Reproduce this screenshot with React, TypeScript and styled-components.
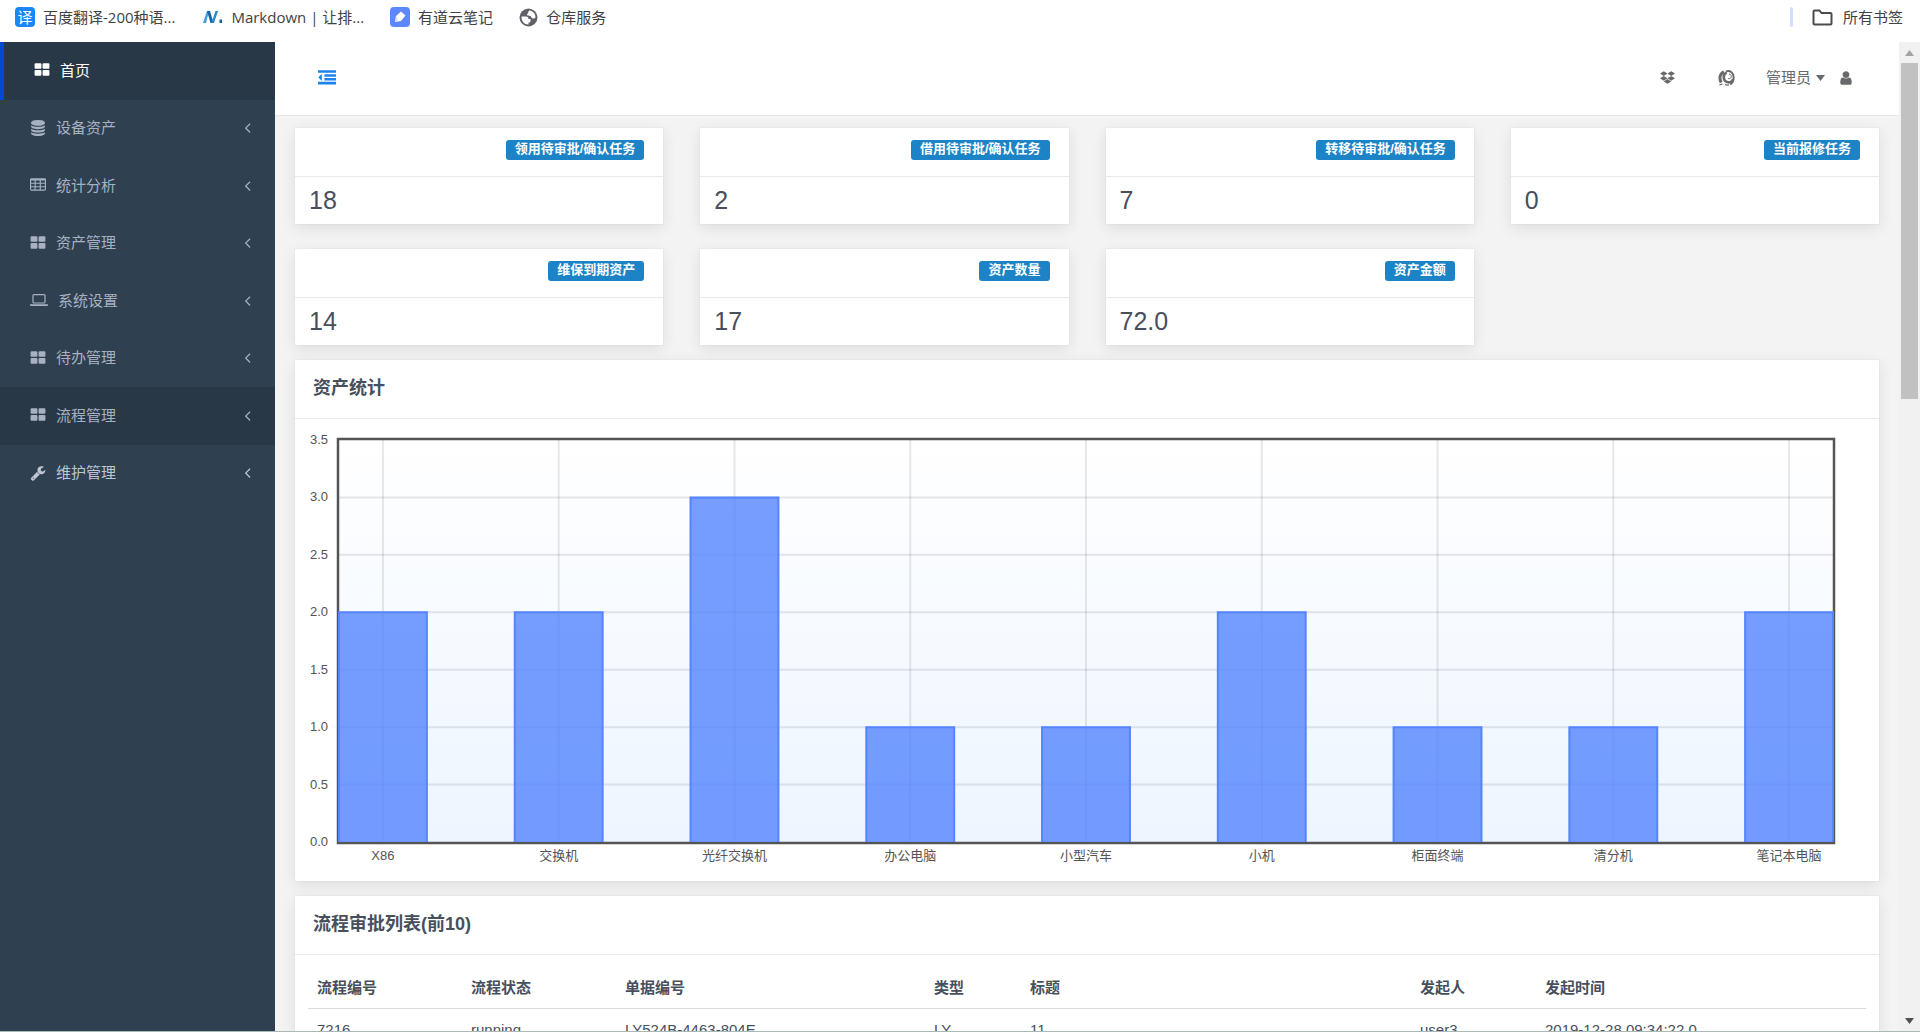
import React, { useLayoutEffect, useRef, useState } from "react";
import styled, { createGlobalStyle, css } from "styled-components";
import { FaDropbox } from "react-icons/fa";

const sans = `"Liberation Sans", "Noto Sans CJK SC", sans-serif`;

const GlobalStyle = createGlobalStyle`
  *, *::before, *::after { box-sizing: border-box; }
  body { margin: 0; overflow: hidden; background: #fff; font: 15px/21px ${sans}; color: #484f5c; }
  a { color: inherit; text-decoration: none; }
  button { border: 0; padding: 0; background: none; font: inherit; color: inherit; cursor: pointer; }
  ul { margin: 0; padding: 0; list-style: none; }
`;

const Page = styled.div`
  display: flex;
  flex-direction: column;
  height: 100vh;
  border-bottom: 1px solid #a9bab6;
`;

/* bookmarks bar */
const Bookmarks = styled.nav`
  display: flex;
  align-items: center;
  flex: none;
  height: 42px;
  padding: 0 17px 8px 15px;
  color: #3f4144;
  font-family: "Open Sans", "Noto Sans CJK SC", sans-serif;
`;
const Bookmark = styled.a`
  display: flex;
  align-items: center;
  gap: 8px;
  margin-right: 26px;
  white-space: nowrap;
  svg { flex: none; }
`;
const AllBookmarks = styled.button`
  display: flex;
  align-items: center;
  gap: 10px;
  margin-left: auto;
  padding-left: 19px;
  &::before { content: ""; width: 3px; height: 20px; margin-right: 9px; border-radius: 2px; background: #cfe0fc; }
`;
const SiteBadge = styled.span`
  display: grid;
  place-items: center;
  width: 20px;
  height: 20px;
  border-radius: 4px;
  background: #1a86fa;
  color: #fff;
  font-size: 15px;
  line-height: 20px;
`;

const Body = styled.div`
  display: flex;
  flex: 1;
  min-height: 0;
`;

/* sidebar */
const Sidebar = styled.aside`
  flex: none;
  width: 275px;
  background: #2f4050;
`;
const NavList = styled.ul`
  display: grid;
  grid-auto-rows: 1fr;
  height: 460px;
`;
const NavItem = styled.li<{ $tone?: "active" | "dark" | "light" }>`
  display: flex;
  color: ${(p) => (p.$tone === "active" ? "#fff" : p.$tone === "light" ? "#bfc7d4" : "#a7b1c2")};
  ${(p) => (p.$tone === "active" || p.$tone === "dark") && css`background: #293846;`}
  ${(p) => p.$tone === "active" && css`border-left: 4px solid #0549d2;`}
`;
const NavLink = styled.a`
  display: flex;
  align-items: center;
  flex: 1;
  gap: 10px;
  padding: 0 19px 1px 30px;
  svg:last-child:not(:first-child) { margin-left: auto; }
`;

/* main column */
const Main = styled.main`
  flex: 1;
  min-width: 0;
  overflow: hidden;
  background: #f3f3f3;
`;
const TopBar = styled.header`
  display: flex;
  align-items: center;
  height: 74px;
  padding: 0 45px 2px 43px;
  border-bottom: 1px solid #e7e7e7;
  background: #fff;
  color: #676a6c;
`;
const ToggleButton = styled.button`
  display: flex;
  color: #1d84ee;
`;
const Tools = styled.div`
  display: flex;
  align-items: center;
  margin-left: auto;
`;
const ToolButton = styled.button`
  display: flex;
  margin-right: 43px;
`;
const UserButton = styled.button`
  display: flex;
  align-items: center;
  gap: 5px;
  margin-left: -12px;
  svg:last-child { margin-left: 8px; }
`;
const Content = styled.div`
  display: flex;
  flex-direction: column;
  gap: 15px;
  padding: 12px 20px;
`;
const cardShadow = css`
  background: #fff;
  box-shadow: 0 0 0 1px rgba(0, 0, 0, 0.02), 0 4px 14px rgba(0, 0, 0, 0.09);
`;
const StatGrid = styled.section`
  display: grid;
  grid-template-columns: repeat(4, 1fr);
  gap: 25px 37px;
`;
const StatCard = styled.article`
  ${cardShadow}
`;
const StatHead = styled.div`
  display: flex;
  justify-content: flex-end;
  height: 49px;
  padding: 12px 19px;
  border-bottom: 1px solid #e7e9ec;
`;
const Badge = styled.span`
  height: 20px;
  padding: 0 9px;
  border-radius: 3px;
  background: #1c84c6;
  color: #fff;
  font-size: 13px;
  font-weight: 700;
  line-height: 18px;
`;
const StatValue = styled.div`
  padding: 9px 14px 10px;
  font-size: 25px;
  line-height: 28px;
`;
const Panel = styled.section`
  ${cardShadow}
`;
const PanelTitle = styled.h2`
  margin: 0;
  padding: 18px 18px 20px;
  border-bottom: 1px solid #e7e9ec;
  font-size: 18px;
  font-weight: 700;
  line-height: 20px;
`;
const PanelBody = styled.div`
  padding: 13px;
`;
const ChartBox = styled.div`
  height: 436px;
  svg { display: block; overflow: visible; }
  text { font-size: 13px; fill: #545454; }
`;

/* table */
const Table = styled.table`
  width: 100%;
  table-layout: fixed;
  border-collapse: collapse;
  text-align: left;
`;
const Th = styled.th`
  padding: 9px 9px 10px;
  border-bottom: 1px solid #d9dbdd;
  line-height: 21px;
`;
const Td = styled.td`
  padding: 10px 9px;
  line-height: 21px;
`;

/* scrollbar */
const ScrollTrack = styled.div`
  display: flex;
  flex-direction: column;
  align-items: center;
  flex: none;
  width: 21px;
  background: #f1f1f1;
`;
const ScrollArrow = styled.span<{ $down?: boolean }>`
  display: grid;
  place-items: center;
  height: 21px;
  ${(p) => p.$down && css`margin-top: auto;`}
`;
const ScrollThumb = styled.span`
  width: 17px;
  height: 34%;
  background: #c1c1c1;
`;

/* icons on a 1792-unit grid */
const ICONS = {
  thLarge: "M832 1024v384q0 52-38 90t-90 38h-512q-52 0-90-38t-38-90v-384q0-52 38-90t90-38h512q52 0 90 38t38 90zm0-768v384q0 52-38 90t-90 38h-512q-52 0-90-38t-38-90v-384q0-52 38-90t90-38h512q52 0 90 38t38 90zm896 768v384q0 52-38 90t-90 38h-512q-52 0-90-38t-38-90v-384q0-52 38-90t90-38h512q52 0 90 38t38 90zm0-768v384q0 52-38 90t-90 38h-512q-52 0-90-38t-38-90v-384q0-52 38-90t90-38h512q52 0 90 38t38 90z",
  database: "M896 768q237 0 443-43t325-127v170q0 69-103 128t-280 93.500-385 34.500-385-34.500-280-93.500-103-128v-170q119 84 325 127t443 43zm0 768q237 0 443-43t325-127v170q0 69-103 128t-280 93.500-385 34.500-385-34.500-280-93.500-103-128v-170q119 84 325 127t443 43zm0-384q237 0 443-43t325-127v170q0 69-103 128t-280 93.500-385 34.500-385-34.500-280-93.500-103-128v-170q119 84 325 127t443 43zm0-1152q208 0 385 34.500t280 93.500 103 128v128q0 69-103 128t-280 93.500-385 34.500-385-34.500-280-93.500-103-128v-128q0-69 103-128t280-93.500 385-34.500z",
  wrench: "M448 1472q0-26-19-45t-45-19-45 19-19 45 19 45 45 19 45-19 19-45zm644-420l-682 682q-37 37-90 37-52 0-91-37l-106-108q-38-36-38-90 0-53 38-91l681-681q39 98 114.500 173.500t173.500 114.500zm634-435q0 39-23 106-47 134-164.500 217.500t-258.500 83.500q-185 0-316.500-131.500t-131.500-316.500 131.500-316.500 316.500-131.500q58 0 121.500 16.500t107.500 46.500q16 11 16 28t-16 28l-293 169v224l193 107q5-3 79-48.500t135.500-81 70.500-35.500q15 0 23.500 10t8.500 25z",
  outdent: "M384 544v576q0 13-9.500 22.500t-22.500 9.500q-14 0-23-9l-288-288q-9-9-9-23t9-23l288-288q9-9 23-9 13 0 22.500 9.500t9.500 22.500zM0 1280h1792v256h-1792zM640 896h1152v256h-1152zM640 512h1152v256h-1152zM0 128h1792v256h-1792z",
  angleLeft: "M1203 544q0 13-10 23l-393 393 393 393q10 10 10 23t-10 23l-50 50q-10 10-23 10t-23-10l-466-466q-10-10-10-23t10-23l466-466q10-10 23-10t23 10l50 50q10 10 10 23z",
  user: "M1536 1399q0 109-62.500 187t-150.500 78h-854q-88 0-150.500-78t-62.500-187q0-85 8.500-160.500t31.500-152 58.500-131 94-89 134.500-34.500q131 128 313 128t313-128q76 0 134.500 34.500t94 89 58.500 131 31.500 152 8.500 160.500zm-256-887q0 159-112.500 271.500t-271.500 112.500-271.500-112.500-112.500-271.500 112.500-271.500 271.500-112.500 271.500 112.500 112.500 271.500z",
  table: "M160 128h1472q160 0 160 160v1088q0 160-160 160h-1472q-160 0-160-160v-1088q0-160 160-160zM128 384v256h384v-256zM640 384v256h448v-256zM1216 384v256h448v-256zM128 768v256h384v-256zM640 768v256h448v-256zM1216 768v256h448v-256zM128 1152v256h384v-256zM640 1152v256h448v-256zM1216 1152v256h448v-256z",
  laptop: "M416 1280q-66 0-113-47t-47-113v-704q0-66 47-113t113-47h1088q66 0 113 47t47 113v704q0 66-47 113t-113 47h-1088zm-32-864v704q0 13 9.500 22.500t22.500 9.500h1088q13 0 22.500-9.500t9.500-22.500v-704q0-13-9.500-22.500t-22.500-9.500h-1088q-13 0-22.500 9.500t-9.500 22.500zm1376 928h160v96q0 40-47 68t-113 28h-1600q-66 0-113-28t-47-68v-96h1760z",
};
type IconName = keyof typeof ICONS;

function Icon({ name, size = 16, box = "0 0 1792 1792" }: { name: IconName; size?: number; box?: string }) {
  return (
    <svg width={size} height={size} viewBox={box} fill="currentColor" fillRule="evenodd" aria-hidden="true">
      <path d={ICONS[name]} />
    </svg>
  );
}

const SwirlIcon = () => (
  <svg width="17" height="16" viewBox="0 0 17 16" fill="none" stroke="currentColor" aria-hidden="true">
    <path d="M6 2C2 3.500 .8 8 3.200 12.500" strokeWidth="3" />
    <path d="M8.500 2.500C4.500 5 5 10.500 9 12c3 1 5.500-.5 6-3" strokeWidth="2.600" />
    <path d="M8 1.500C12 0 16 3 15.600 8c-.1 3-1.500 5.500-3.300 6.500" strokeWidth="2" />
    <path d="M11 4c2 .3 2.800 1.800 2 3.500-.6 1.200-2 1.500-3 .8" strokeWidth="1" />
    <path d="M1.500 14.800l3-.8M7 14.500c1.200.6 2.600.7 4 .3" strokeWidth="1.200" />
  </svg>
);
const NIcon = () => (
  <svg width="22" height="16" viewBox="-2 0 22 16" aria-hidden="true">
    <path d="M0 14L4 2h2L3 14z" fill="#3ba0dc" />
    <path d="M4 2h3l3.500 12h-3z" fill="#17659f" />
    <path d="M8.500 14L12.500 2h2.500l-4 12z" fill="#2787c8" />
    <path d="M16.500 10.500h2.500v3.500h-2.500z" fill="#17659f" />
  </svg>
);
const NoteIcon = () => (
  <svg width="20" height="20" viewBox="0 0 20 20" aria-hidden="true">
    <rect width="20" height="20" rx="4" fill="#5b87ff" />
    <path d="M5 15l1-6 5-4.500 4.500 4L11 14z" fill="#fff" />
    <path d="M5 15l1-6 2 4z" fill="#cfdcff" />
  </svg>
);
const GlobeIcon = () => (
  <svg width="19" height="19" viewBox="0 0 19 19" aria-hidden="true">
    <circle cx="9.500" cy="9.500" r="9" fill="#5f6368" />
    <path d="M2.500 8.500h4.700c1.400 0 2.300 1 2.300 2.500h2v2c0 1.200-.8 1.600-2 1.600v1.900C5 16.500 2.400 13 2.500 8.500z" fill="#fff" />
    <path d="M10.500 2.500c3.500.4 6 3.200 6 7-.8 1.100-2.600 1.200-3.700.4-.8-.6-.6-1.400-1.600-1.800-1.300-.4-2.900-.1-3.100-1.300-.2-1.100 1.200-1.300 1.200-2.300 0-.8.300-1.600 1.200-2z" fill="#fff" />
  </svg>
);
const FolderIcon = () => (
  <svg width="21" height="17" viewBox="0 0 21 17" fill="none" stroke="#4a4c50" strokeWidth="2" aria-hidden="true">
    <path d="M2.500 1.500h5l2 2.500h9q1 0 1 1v9.500q0 1-1 1h-16q-1 0-1-1v-12q0-1 1-1z" />
  </svg>
);
const Triangle = ({ down, color }: { down?: boolean; color: string }) => (
  <svg width="9" height="6" viewBox="0 0 9 6" aria-hidden="true">
    <path d={down ? "M0 0h9L4.500 6z" : "M0 6h9L4.500 0z"} fill={color} />
  </svg>
);

const NAV: { label: string; icon: IconName; size?: number; box?: string; tone?: "active" | "dark" | "light" }[] = [
  { label: "首页", icon: "thLarge", tone: "active" },
  { label: "设备资产", icon: "database" },
  { label: "统计分析", icon: "table" },
  { label: "资产管理", icon: "thLarge" },
  { label: "系统设置", icon: "laptop", size: 18, box: "0 0 1920 1792" },
  { label: "待办管理", icon: "thLarge" },
  { label: "流程管理", icon: "thLarge", tone: "dark" },
  { label: "维护管理", icon: "wrench", tone: "light" },
];

const STATS = [
  ["领用待审批/确认任务", "18"],
  ["借用待审批/确认任务", "2"],
  ["转移待审批/确认任务", "7"],
  ["当前报修任务", "0"],
  ["维保到期资产", "14"],
  ["资产数量", "17"],
  ["资产金额", "72.0"],
];

const BARS: [string, number][] = [
  ["X86", 2],
  ["交换机", 2],
  ["光纤交换机", 3],
  ["办公电脑", 1],
  ["小型汽车", 1],
  ["小机", 2],
  ["柜面终端", 1],
  ["清分机", 1],
  ["笔记本电脑", 2],
];

const COLUMNS: [string, number | undefined][] = [
  ["流程编号", 154],
  ["流程状态", 154],
  ["单据编号", 309],
  ["类型", 96],
  ["标题", 390],
  ["发起人", 125],
  ["发起时间", undefined],
];
const ROW = ["7216", "running", "LY524B-4463-804E", "LY", "11", "user3", "2019-12-28 09:34:22.0"];

function BarChart() {
  const box = useRef<HTMLDivElement>(null);
  const [width, setWidth] = useState(1556);
  useLayoutEffect(() => {
    const el = box.current!;
    const measure = () => setWidth(el.clientWidth);
    measure();
    const observer = new ResizeObserver(measure);
    observer.observe(el);
    return () => observer.disconnect();
  }, []);

  const left = 31;
  const top = 8;
  const plotW = width - left - 33;
  const plotH = 402;
  const unitX = plotW / 8.5;
  const unitY = plotH / 3.5;
  const ticks = [0, 0.5, 1, 1.5, 2, 2.5, 3, 3.5];

  return (
    <ChartBox ref={box}>
      <svg width={width} height={436} role="img" aria-label="资产统计">
        <defs>
          <linearGradient id="plot" x1="0" y1="0" x2="0" y2="1">
            <stop offset="0" stopColor="#fff" />
            <stop offset="1" stopColor="#edf5ff" />
          </linearGradient>
        </defs>
        <rect x={left} y={top} width={plotW} height={plotH} fill="url(#plot)" />
        <g stroke="#545454" strokeOpacity="0.14" strokeWidth="2">
          {ticks.slice(1, -1).map((t) => (
            <line key={t} x1={left} x2={left + plotW} y1={top + plotH - t * unitY} y2={top + plotH - t * unitY} />
          ))}
          {BARS.map(([name], i) => (
            <line key={name} x1={left + (i + 0.25) * unitX} x2={left + (i + 0.25) * unitX} y1={top} y2={top + plotH} />
          ))}
        </g>
        <rect x={left - 1} y={top - 1} width={plotW + 2} height={plotH + 2} fill="none" stroke="#545454" strokeWidth="2.500" />
        {BARS.map(([name, value], i) => {
          const x = left + i * unitX;
          const y = top + plotH - value * unitY;
          const w = unitX / 2;
          return (
            <g key={name}>
              <rect x={x} y={y} width={w} height={value * unitY} fill="#5484ff" fillOpacity="0.8" />
              <path d={`M${x} ${top + plotH}V${y}H${x + w}V${top + plotH}`} fill="none" stroke="#5484ff" strokeWidth="2" />
              <text x={x + w / 2} y={428} textAnchor="middle">{name}</text>
            </g>
          );
        })}
        {ticks.map((t) => (
          <text key={t} x={20} y={top + 4 + plotH - t * unitY} textAnchor="end">{t.toFixed(1)}</text>
        ))}
      </svg>
    </ChartBox>
  );
}

export default function App() {
  return (
    <Page>
      <GlobalStyle />
      <Bookmarks>
        <Bookmark href="#"><SiteBadge>译</SiteBadge>百度翻译-200种语...</Bookmark>
        <Bookmark href="#"><NIcon />Markdown | 让排...</Bookmark>
        <Bookmark href="#"><NoteIcon />有道云笔记</Bookmark>
        <Bookmark href="#"><GlobeIcon />仓库服务</Bookmark>
        <AllBookmarks><FolderIcon />所有书签</AllBookmarks>
      </Bookmarks>
      <Body>
        <Sidebar>
          <NavList>
            {NAV.map(({ label, icon, size, box, tone }) => (
              <NavItem key={label} $tone={tone}>
                <NavLink href="#">
                  <Icon name={icon} size={size} box={box} />
                  {label}
                  {tone !== "active" && <Icon name="angleLeft" size={17} />}
                </NavLink>
              </NavItem>
            ))}
          </NavList>
        </Sidebar>
        <Main>
          <TopBar>
            <ToggleButton aria-label="收起菜单"><Icon name="outdent" size={18} /></ToggleButton>
            <Tools>
              <ToolButton aria-label="Dropbox"><FaDropbox size={15} /></ToolButton>
              <ToolButton aria-label="主题"><SwirlIcon /></ToolButton>
              <UserButton>
                管理员
                <Triangle down color="#676a6c" />
                <Icon name="user" size={16} />
              </UserButton>
            </Tools>
          </TopBar>
          <Content>
            <StatGrid>
              {STATS.map(([label, value]) => (
                <StatCard key={label}>
                  <StatHead><Badge>{label}</Badge></StatHead>
                  <StatValue>{value}</StatValue>
                </StatCard>
              ))}
            </StatGrid>
            <Panel>
              <PanelTitle>资产统计</PanelTitle>
              <PanelBody><BarChart /></PanelBody>
            </Panel>
            <Panel>
              <PanelTitle>流程审批列表(前10)</PanelTitle>
              <PanelBody>
                <Table>
                  <colgroup>
                    {COLUMNS.map(([name, w]) => <col key={name} width={w} />)}
                  </colgroup>
                  <thead>
                    <tr>{COLUMNS.map(([name]) => <Th key={name} scope="col">{name}</Th>)}</tr>
                  </thead>
                  <tbody>
                    <tr>{ROW.map((cell) => <Td key={cell}>{cell}</Td>)}</tr>
                  </tbody>
                </Table>
              </PanelBody>
            </Panel>
          </Content>
        </Main>
        <ScrollTrack aria-hidden="true">
          <ScrollArrow><Triangle color="#a3a3a3" /></ScrollArrow>
          <ScrollThumb />
          <ScrollArrow $down><Triangle down color="#505050" /></ScrollArrow>
        </ScrollTrack>
      </Body>
    </Page>
  );
}
